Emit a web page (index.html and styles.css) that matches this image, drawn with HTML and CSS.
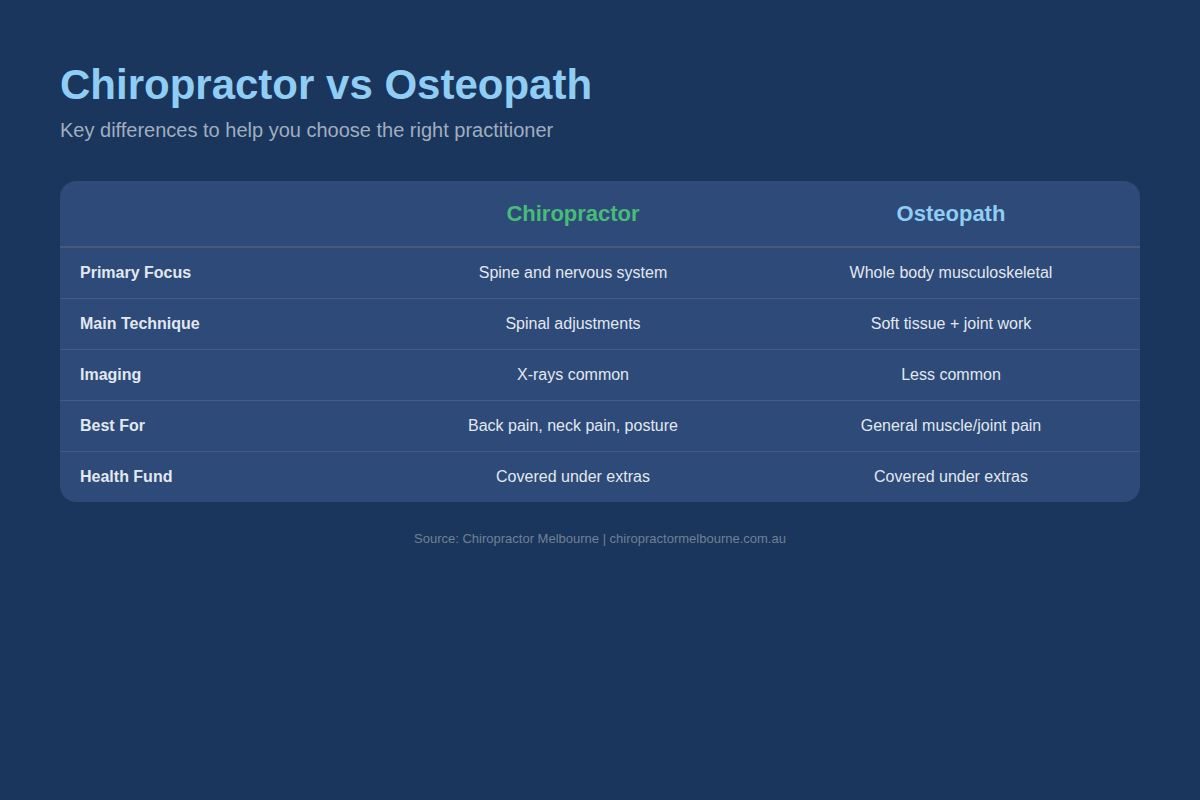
FILE: index.html
```html
<!DOCTYPE html>
<html lang="en">
<head>
<meta charset="utf-8">
<title>Chiropractor vs Osteopath</title>
<link rel="stylesheet" href="styles.css">
</head>
<body>
<main class="page">
  <h1 class="title">Chiropractor vs Osteopath</h1>
  <p class="subtitle">Key differences to help you choose the right practitioner</p>
  <div class="card">
    <table class="compare">
      <colgroup><col class="c1"><col class="c2"><col class="c3"></colgroup>
      <thead>
        <tr><th></th><th class="chiro">Chiropractor</th><th class="osteo">Osteopath</th></tr>
      </thead>
      <tbody>
        <tr><td class="label">Primary Focus</td><td>Spine and nervous system</td><td>Whole body musculoskeletal</td></tr>
        <tr><td class="label">Main Technique</td><td>Spinal adjustments</td><td>Soft tissue + joint work</td></tr>
        <tr><td class="label">Imaging</td><td>X-rays common</td><td>Less common</td></tr>
        <tr><td class="label">Best For</td><td>Back pain, neck pain, posture</td><td>General muscle/joint pain</td></tr>
        <tr><td class="label">Health Fund</td><td>Covered under extras</td><td>Covered under extras</td></tr>
      </tbody>
    </table>
  </div>
  <p class="source">Source: Chiropractor Melbourne | chiropractormelbourne.com.au</p>
</main>
</body>
</html>
```
FILE: styles.css
```css
html, body {
  margin: 0;
  padding: 0;
}
body {
  background: #1b365d;
  font-family: "Liberation Sans", Arial, sans-serif;
  color: #e2e8f0;
  width: 1200px;
  height: 800px;
}
.page {
  padding: 60px;
}
.title {
  margin: 0;
  font-size: 42px;
  line-height: 50px;
  font-weight: 700;
  color: #90cdf4;
}
.subtitle {
  margin: 6px 0 0;
  font-size: 20px;
  line-height: 28px;
  color: #a0aec0;
}
.card {
  margin-top: 37px;
  background: #2d4a78;
  border-radius: 16px;
  overflow: hidden;
}
.compare {
  width: 100%;
  border-collapse: collapse;
  table-layout: fixed;
}
.c1 { width: 30%; }
.c2 { width: 35%; }
.c3 { width: 35%; }
.compare th {
  height: 65px;
  padding: 0 20px;
  font-size: 22px;
  font-weight: 700;
  text-align: center;
  border-bottom: 2px solid #4a5a75;
}
.compare th.chiro { color: #48bb78; }
.compare th.osteo { color: #90cdf4; }
.compare td {
  height: 50px;
  padding: 0 20px;
  font-size: 16px;
  text-align: center;
  border-bottom: 1px solid rgba(255, 255, 255, 0.1);
}
.compare tbody tr:last-child td { border-bottom: none; }
.compare td.label {
  text-align: left;
  font-weight: 700;
}
.source {
  margin: 29px 0 0;
  text-align: center;
  font-size: 13px;
  color: #718096;
}
```
